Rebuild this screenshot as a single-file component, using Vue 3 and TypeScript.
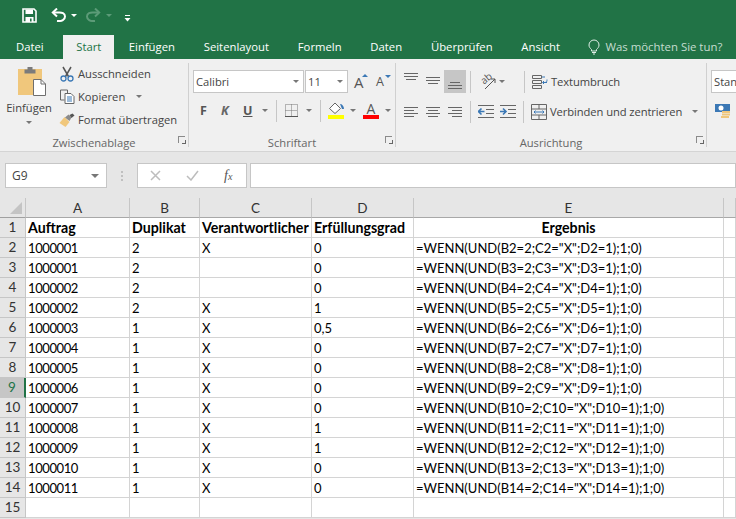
<script setup lang="ts">
interface Row { a: string; b: string; c: string; d: string; e: string }
const raw: [string, string, string, string][] = [
  ['1000001', '2', 'X', '0'],
  ['1000001', '2', '', '0'],
  ['1000002', '2', '', '0'],
  ['1000002', '2', 'X', '1'],
  ['1000003', '1', 'X', '0,5'],
  ['1000004', '1', 'X', '0'],
  ['1000005', '1', 'X', '0'],
  ['1000006', '1', 'X', '0'],
  ['1000007', '1', 'X', '0'],
  ['1000008', '1', 'X', '1'],
  ['1000009', '1', 'X', '1'],
  ['1000010', '1', 'X', '0'],
  ['1000011', '1', 'X', '0'],
]
const rows: Row[] = raw.map((r, i) => {
  const n = i + 2
  return { a: r[0], b: r[1], c: r[2], d: r[3], e: `=WENN(UND(B${n}=2;C${n}="X";D${n}=1);1;0)` }
})
const tabs = ['Datei', 'Start', 'Einfügen', 'Seitenlayout', 'Formeln', 'Daten', 'Überprüfen', 'Ansicht']
</script>

<template>
  <div class="app">
    <div class="title">
      <svg class="save" width="15" height="15" viewBox="0 0 15 15"><path d="M1 1h11l2 2v11H1z" fill="none" stroke="#fff" stroke-width="1.600"/><path d="M3.500 1.500h7.500v4.500H3.500zM3.500 9h8v5h-8z" fill="#fff"/><path d="M8 10.500h1.600v3H8z" fill="#217346"/></svg>
      <svg class="undo" width="16" height="14" viewBox="0 0 16 14"><path d="M6 13c5 .5 8-1.500 8-4.500S11 4 7 4.500H3" fill="none" stroke="#fff" stroke-width="2"/><path d="M6 .500 1.800 4.500 6 8.500" fill="none" stroke="#fff" stroke-width="2"/></svg>
      <i class="tcaret"></i>
      <svg class="redo" width="15" height="14" viewBox="0 0 15 14"><path d="M9 13c-5 .5-8-1.500-8-4.500S4 4 8 4.500h4" fill="none" stroke="#5c9b78" stroke-width="2"/><path d="M9 .500 13.200 4.500 9 8.500" fill="none" stroke="#5c9b78" stroke-width="2"/></svg>
      <i class="tcaret dim"></i>
      <svg class="qat" width="7" height="8" viewBox="0 0 7 8"><path d="M1 1h5v1H1z" fill="#fff"/><path d="M0.500 4h6L3.500 7.500z" fill="#fff"/></svg>
    </div>

    <div class="tabs">
      <span v-for="t in tabs" :key="t" class="tab" :class="{ active: t === 'Start', file: t === 'Datei' }">{{ t }}</span>
      <svg class="bulb" width="12" height="16" viewBox="0 0 12 16"><path d="M3.500 10.500C2 9 1 8 1 6a5 5 0 0 1 10 0c0 2-1 3-2.500 4.500v1.500h-5z" fill="none" stroke="#dfeee6" stroke-width="1"/><path d="M4 13.500h4M5 15h2" stroke="#dfeee6" stroke-width="1"/></svg>
      <span class="tell">Was möchten Sie tun?</span>
    </div>

    <div class="ribbon">
      <section class="group g-clip">
        <div class="body clip-body">
          <div class="paste">
            <svg width="28" height="29" viewBox="0 0 28 29">
              <path d="M0 2h24v26H0z" fill="#f0c77c"/>
              <path d="M6.500 2.500h11v4h-11z" fill="#7b7b7b"/><path d="M9.500 0h5v3h-5z" fill="#7b7b7b"/>
              <path d="M15.500 12.500h7.500l4.500 4.500v11.500h-12z" fill="#fff" stroke="#6f6f6f"/>
              <path d="M23 12.500V17h4.500" fill="none" stroke="#6f6f6f"/>
            </svg>
            <span class="paste-label">Einfügen</span>
            <i class="caret"></i>
          </div>
          <div class="clip-list">
            <div class="clip-row">
              <svg width="14" height="16" viewBox="0 0 14 16"><path d="M3 1l5.500 9.500M11 1 5.500 10.500" stroke="#555" stroke-width="1.500" fill="none"/><circle cx="3.500" cy="12.500" r="2.500" fill="none" stroke="#3b78b5" stroke-width="1.300"/><circle cx="10.500" cy="12.500" r="2.500" fill="none" stroke="#3b78b5" stroke-width="1.300"/></svg>
              <span>Ausschneiden</span>
            </div>
            <div class="clip-row">
              <svg width="15" height="15" viewBox="0 0 15 15"><path d="M1 1h7v3M1 1v10h4" fill="none" stroke="#666"/><path d="M5.500 4.500h6l3 3v7h-9z" fill="#fff" stroke="#666"/><path d="M7.500 8h5M7.500 10h5M7.500 12h5" stroke="#3b78b5"/></svg>
              <span>Kopieren</span>
              <i class="caret copy-caret"></i>
            </div>
            <div class="clip-row">
              <svg width="17" height="14" viewBox="0 0 17 14"><path d="M1 10l5-6 5 5-4 5z" fill="#f0c77c"/><path d="M6.500 4.500 10 1.500l3 3-2 3.500z" fill="#8a8a8a"/><path d="M11 2l3-1.500 2 2-3 2.500z" fill="#555"/></svg>
              <span>Format übertragen</span>
            </div>
          </div>
        </div>
        <footer class="label">Zwischenablage<i class="launch"></i></footer>
      </section>

      <section class="group g-font">
        <div class="body">
          <div class="line l1">
            <div class="field font-name"><span>Calibri</span><i class="caret"></i></div>
            <div class="field font-size"><span>11</span><i class="caret"></i></div>
            <span class="grow">A<i class="up"></i></span>
            <span class="grow small">A<i class="down"></i></span>
          </div>
          <div class="line l2">
            <b class="fmt f">F</b>
            <b class="fmt k">K</b>
            <b class="fmt u">U</b>
            <i class="caret c-u"></i>
            <i class="sep s1"></i>
            <svg class="borders" width="13" height="13" viewBox="0 0 13 13"><path d="M.5.500h12v12H.500zM6.500.500v12M.500 6.500h12" fill="none" stroke="#777" stroke-dasharray="1 1"/><path d="M0 12.500h13" stroke="#555"/></svg>
            <i class="caret c-b"></i>
            <i class="sep s2"></i>
            <div class="fill">
              <svg width="17" height="12" viewBox="0 0 17 12"><path d="M7 1l5.500 5.500L7 11.500 1.500 6.500z" fill="#fff" stroke="#666"/><path d="M12 2c2 0 4 2 4 5h-2z" fill="#3b78b5"/></svg>
              <i class="bar yellow"></i>
            </div>
            <i class="caret c-f"></i>
            <div class="fcolor"><span>A</span><i class="bar red"></i></div>
            <i class="caret c-c"></i>
          </div>
        </div>
        <footer class="label">Schriftart<i class="launch"></i></footer>
      </section>

      <section class="group g-align">
        <div class="body">
          <div class="line a1">
            <div class="lines-btn">
              <svg width="22" height="23" viewBox="0 0 22 23"><path d="M4 3.500h14M4 6.500h14M6 9.500h10" stroke="#666"/></svg>
            </div>
            <div class="lines-btn">
              <svg width="22" height="23" viewBox="0 0 22 23"><path d="M4 7.500h14M4 10.500h14M6 13.500h10" stroke="#666"/></svg>
            </div>
            <div class="lines-btn on">
              <svg width="22" height="23" viewBox="0 0 22 23"><path d="M6 12.500h10M4 15.500h14M4 18.500h14" stroke="#666"/></svg>
            </div>
            <i class="sep as1"></i>
            <span class="orient">
              <span class="ab">ab</span>
              <svg width="18" height="16" viewBox="0 0 18 16"><path d="M6 15 16 5M16 5h-4M16 5v4" stroke="#555" fill="none"/></svg>
            </span>
            <i class="caret c-o"></i>
            <i class="sep as2"></i>
            <svg class="wide-ic" width="16" height="16" viewBox="0 0 16 16"><path d="M.500 1.500h9v3h-9zM.500 6.500h9v3h-9zM.500 11.500h9v3h-9z" fill="none" stroke="#666"/><path d="M10 3h3M13 8.500c2 0 2-2 2-3M15 8.500h-4M12 7l-1.500 1.500L12 10" stroke="#3b78b5" fill="none"/></svg>
            <span class="wide-t">Textumbruch</span>
          </div>
          <div class="line a2">
            <div class="lines-btn">
              <svg width="22" height="23" viewBox="0 0 22 23"><path d="M4 7.500h14M4 10.500h10M4 13.500h14M4 16.500h10" stroke="#666"/></svg>
            </div>
            <div class="lines-btn">
              <svg width="22" height="23" viewBox="0 0 22 23"><path d="M4 7.500h14M6 10.500h10M4 13.500h14M6 16.500h10" stroke="#666"/></svg>
            </div>
            <div class="lines-btn">
              <svg width="22" height="23" viewBox="0 0 22 23"><path d="M4 7.500h14M8 10.500h10M4 13.500h14M8 16.500h10" stroke="#666"/></svg>
            </div>
            <i class="sep as1b"></i>
            <svg class="ind first" width="16" height="13" viewBox="0 0 16 13"><path d="M0 .500h16M8 4.500h8M8 8.500h8M0 12.500h16" stroke="#666"/><path d="M6.500 6.500H1M3.500 3.500l-3 3 3 3" stroke="#3b78b5" stroke-width="1.600" fill="none"/></svg>
            <svg class="ind" width="16" height="13" viewBox="0 0 16 13"><path d="M0 .500h16M8 4.500h8M8 8.500h8M0 12.500h16" stroke="#666"/><path d="M0 6.500h5.500M3 3.500l3 3-3 3" stroke="#3b78b5" stroke-width="1.600" fill="none"/></svg>
            <i class="sep as2b"></i>
            <svg class="wide-ic" width="16" height="16" viewBox="0 0 16 16"><path d="M.500.500h15v15H.500zM.500 5h15M.500 11h15M8 .500V5M8 11v4.500" fill="none" stroke="#666"/><path d="M3 8h10" stroke="#3b78b5"/><path d="M4.500 6.500 3 8l1.500 1.500M11.500 6.500 13 8l-1.500 1.500" stroke="#3b78b5" fill="none"/></svg>
            <span class="wide-t">Verbinden und zentrieren</span>
            <i class="caret c-m"></i>
          </div>
        </div>
        <footer class="label">Ausrichtung<i class="launch"></i></footer>
      </section>

      <section class="g-num">
        <div class="field num-field"><span>Standard</span></div>
        <svg class="money" width="17" height="17" viewBox="0 0 17 17"><path d="M1 1h15v8H1z" fill="#3b78b5"/><circle cx="7" cy="5" r="2.500" fill="#fff"/><path d="M8 9h8M8 11.500h8M7 14h8" stroke="#f0c77c" stroke-width="2"/></svg>
      </section>
    </div>

    <div class="formula">
      <div class="namebox"><span>G9</span><i class="caret"></i></div>
      <i class="dots"></i>
      <div class="fx-box">
        <svg width="11" height="11" viewBox="0 0 11 11"><path d="M1 1l9 9M10 1l-9 9" stroke="#bdbdbd" stroke-width="1.500"/></svg>
        <svg width="13" height="11" viewBox="0 0 13 11"><path d="M1 6l4 4 7-9" stroke="#bdbdbd" stroke-width="1.500" fill="none"/></svg>
        <span class="fx"><em>f</em><small>x</small></span>
      </div>
      <div class="input"></div>
    </div>

    <div class="sheet">
      <div class="corner"><i></i></div>
      <div class="colh" v-for="c in ['A','B','C','D','E','']" :key="c">{{ c }}</div>

      <div class="rowh">1</div>
      <div class="cell h">Auftrag</div>
      <div class="cell h">Duplikat</div>
      <div class="cell h">Verantwortlicher</div>
      <div class="cell h">Erfüllungsgrad</div>
      <div class="cell h mid">Ergebnis</div>
      <div class="cell"></div>

      <template v-for="(r, i) in rows" :key="i">
        <div class="rowh" :class="{ sel: i + 2 === 9 }">{{ i + 2 }}</div>
        <div class="cell num">{{ r.a }}</div>
        <div class="cell">{{ r.b }}</div>
        <div class="cell">{{ r.c }}</div>
        <div class="cell">{{ r.d }}</div>
        <div class="cell">{{ r.e }}</div>
        <div class="cell"></div>
      </template>

      <div class="rowh">15</div>
      <div class="cell"></div><div class="cell"></div><div class="cell"></div><div class="cell"></div><div class="cell"></div><div class="cell"></div>
    </div>
  </div>
</template>

<style scoped>
.app {
  width: 736px;
  height: 519px;
  overflow: hidden;
  background: #e6e6e6;
  font-family: "Open Sans", "Noto Sans", sans-serif;
  color: #444;
}
i { display: block; font-style: normal; }

.title {
  height: 35px;
  box-sizing: border-box;
  background: #217346;
  display: flex;
  align-items: flex-start;
  padding: 8px 0 0 22px;
}
.undo { margin-left: 14px; }
.tcaret { width: 0; height: 0; border: 3px solid transparent; border-top: 3px solid #fff; border-bottom: 0; margin: 6px 0 0 4px; }
.tcaret.dim { border-top-color: #5c9b78; margin-left: 5px; }
.redo { margin-left: 9px; }
.qat { margin-left: 12px; margin-top: 6px; }

.tabs {
  height: 24px;
  background: #217346;
  display: flex;
  align-items: stretch;
  color: #fff;
  font-size: 11.300px;
  line-height: 24px;
}
.tab { padding: 0 14.400px; white-space: nowrap; }
.tab.file { padding: 0 19.500px 0 16px; }
.tab.active { background: #f0f0f0; color: #217346; padding: 0 13px; }
.bulb { margin: 4px 0 0 14px; }
.tell { margin-left: 5px; color: #c5ddd0; font-size: 11.400px; }

.ribbon {
  height: 93px;
  box-sizing: border-box;
  background: #f0f0f0;
  border-bottom: 1px solid #d4d4d4;
  display: flex;
  padding-top: 4px;
  font-size: 11.200px;
}
.group {
  box-sizing: border-box;
  flex: none;
  border-right: 1px solid #d0d0d0;
  height: 84px;
  position: relative;
}
.g-clip { width: 189px; }
.g-font { width: 207px; }
.g-align { width: 311px; }
.body { height: 71px; display: flow-root; }
.label {
  height: 17px;
  line-height: 17px;
  text-align: center;
  color: #666;
  font-size: 11.200px;
  position: relative;
}
.launch {
  position: absolute;
  right: 3px;
  top: 2px;
  width: 6px;
  height: 6px;
  border-left: 1px solid #8a8a8a;
  border-top: 1px solid #8a8a8a;
}
.launch::after {
  content: "";
  position: absolute;
  right: -1px;
  bottom: -1px;
  width: 3px;
  height: 3px;
  border-right: 1px solid #666;
  border-bottom: 1px solid #666;
}
.caret {
  width: 0;
  height: 0;
  border-left: 3px solid transparent;
  border-right: 3px solid transparent;
  border-top: 3px solid #777;
  flex: none;
}

.clip-body { display: flex; }
.paste {
  width: 58px;
  flex: none;
  display: flex;
  flex-direction: column;
  align-items: center;
  padding-top: 4px;
}
.paste svg { margin-left: 6px; }
.paste-label { margin-top: 2px; color: #444; line-height: 20px; }
.paste .caret { margin-top: 3px; }
.clip-list { margin-top: -1px; }
.clip-row {
  height: 23px;
  display: flex;
  align-items: center;
  color: #444;
  white-space: nowrap;
}
.clip-row svg { margin-right: 2px; width: 18px; flex: none; }
.copy-caret { margin-left: 11px; }

.line { display: flex; align-items: center; position: relative; }
.l1 { height: 23px; margin-top: 7px; padding-left: 4px; }
.field {
  box-sizing: border-box;
  height: 23px;
  background: #fff;
  border: 1px solid #c6c6c6;
  display: flex;
  align-items: center;
  justify-content: space-between;
  padding: 0 4px 0 2px;
  font-size: 11.200px;
  color: #444;
}
.font-name { width: 111px; margin-right: 1px; }
.font-size { width: 43px; }
.grow { font-size: 15px; color: #555; position: relative; width: 22px; margin-left: 2px; padding-left: 4px; box-sizing: border-box; }
.grow.small { font-size: 12.500px; padding-left: 3px; margin-left: 1px; }
.up, .down { position: absolute; right: 4px; top: 2px; width: 0; height: 0; border: 3px solid transparent; }
.up { border-bottom: 3px solid #3b78b5; border-top: 0; }
.down { border-top: 3px solid #3b78b5; border-bottom: 0; }

.l2 { height: 23px; margin-top: 6px; padding-left: 11px; }
.fmt { width: 21px; font-size: 12.500px; color: #555; }
.k { font-style: italic; color: #666; }
.u { text-decoration: underline; width: 17px; margin-left: 1px; }
.sep { width: 1px; height: 22px; background: #c6c6c6; flex: none; }
.c-u { margin-left: 2px; }
.s1 { margin-left: 8px; }
.borders { margin-left: 8px; }
.c-b { margin-left: 8px; }
.s2 { margin-left: 8px; }
.fill { margin-left: 7px; width: 16px; display: flex; flex-direction: column; align-items: center; }
.bar { width: 16px; height: 4px; margin-top: 1px; }
.yellow { background: #ffff00; }
.red { background: #ff0000; }
.c-f { margin-left: 6px; }
.fcolor { margin-left: 7px; width: 16px; text-align: center; line-height: 13px; font-size: 14px; color: #555; }
.fcolor .bar { margin-top: 0; }
.c-c { margin-left: 6px; }

.a1 { height: 23px; margin-top: 7px; padding-left: 4px; }
.a2 { height: 23px; margin-top: 7px; padding-left: 4px; }
.lines-btn { width: 22px; height: 23px; flex: none; }
.lines-btn svg { display: block; }
.lines-btn.on { background: #c6c6c6; }
.as1 { margin-left: 4px; }
.orient { margin-left: 8px; width: 18px; height: 16px; position: relative; flex: none; }
.orient svg { display: block; }
.ab {
  position: absolute;
  left: 1px;
  top: -2px;
  font-size: 10px;
  line-height: 12px;
  color: #555;
  transform: rotate(-40deg);
}
.c-o { margin-left: 2px; }
.as2 { margin-left: 19px; }
.as1b { margin-left: 4px; }
.ind { margin-left: 6px; flex: none; }
.ind.first { margin-left: 7px; }
.as2b { margin-left: 7px; }
.wide-ic { margin-left: 7px; flex: none; }
.wide-t { margin-left: 3px; color: #444; white-space: nowrap; letter-spacing: -0.080px; }
.c-m { margin-left: 10px; }

.g-num { flex: 1; min-width: 0; overflow: hidden; padding: 7px 0 0 4px; }
.num-field { width: 60px; }
.money { margin: 10px 0 0 3px; display: block; }

.formula {
  height: 46px;
  box-sizing: border-box;
  padding: 11px 0 0 5px;
  display: flex;
  align-items: flex-start;
}
.namebox {
  box-sizing: border-box;
  width: 102px;
  height: 25px;
  background: #fff;
  border: 1px solid #c6c6c6;
  display: flex;
  align-items: center;
  justify-content: space-between;
  padding: 0 7px 0 6px;
  font-size: 12px;
}
.namebox .caret { border-top: 4px solid #777; border-left-width: 4px; border-right-width: 4px; }
.dots { width: 2px; height: 10px; margin: 8px 14px 0 14px; background: repeating-linear-gradient(#c0c0c0 0 2px, transparent 2px 4px); }
.fx-box {
  box-sizing: border-box;
  width: 110px;
  height: 25px;
  background: #fff;
  border: 1px solid #c6c6c6;
  display: flex;
  align-items: center;
  padding-left: 12px;
  gap: 25px;
}
.fx { font-family: "Liberation Serif", serif; color: #555; font-size: 14px; white-space: nowrap; }
.fx small { font-size: 10px; font-style: italic; }
.input { flex: 1; height: 25px; box-sizing: border-box; margin-left: 3px; background: #fff; border: 1px solid #c6c6c6; }

.sheet {
  display: grid;
  grid-template-columns: 26px 104px 70px 112px 102px 310px 1fr;
  grid-template-rows: repeat(16, 20px);
  background: #fff;
  font-family: Lato, "Open Sans", sans-serif;
  font-size: 13px;
  color: #000;
}
.corner { background: #e6e6e6; border-right: 1px solid #c6c6c6; border-bottom: 1px solid #a0a0a0; position: relative; }
.corner i { position: absolute; right: 3px; bottom: 3px; width: 0; height: 0; border-left: 12px solid transparent; border-bottom: 12px solid #c4c4c4; }
.colh {
  background: #e6e6e6;
  border-right: 1px solid #c6c6c6;
  border-bottom: 1px solid #a8a8a8;
  text-align: center;
  line-height: 21px;
  color: #333;
  font-size: 13.500px;
}
.rowh {
  box-sizing: border-box;
  background: #e6e6e6;
  border-right: 1px solid #c6c6c6;
  border-bottom: 1px solid #c6c6c6;
  text-align: center;
  line-height: 19px;
  color: #333;
  font-size: 13.500px;
}
.rowh.sel { background: #c6c6c6; border-right: 2px solid #217346; color: #217346; }
.cell {
  box-sizing: border-box;
  border-right: 1px solid #d4d4d4;
  border-bottom: 1px solid #d4d4d4;
  padding-left: 2px;
  line-height: 20px;
  white-space: nowrap;
  overflow: hidden;
}
.num { letter-spacing: -0.400px; }
.h { font-weight: 700; font-size: 14.200px; }
.mid { text-align: center; padding-left: 0; }
</style>
